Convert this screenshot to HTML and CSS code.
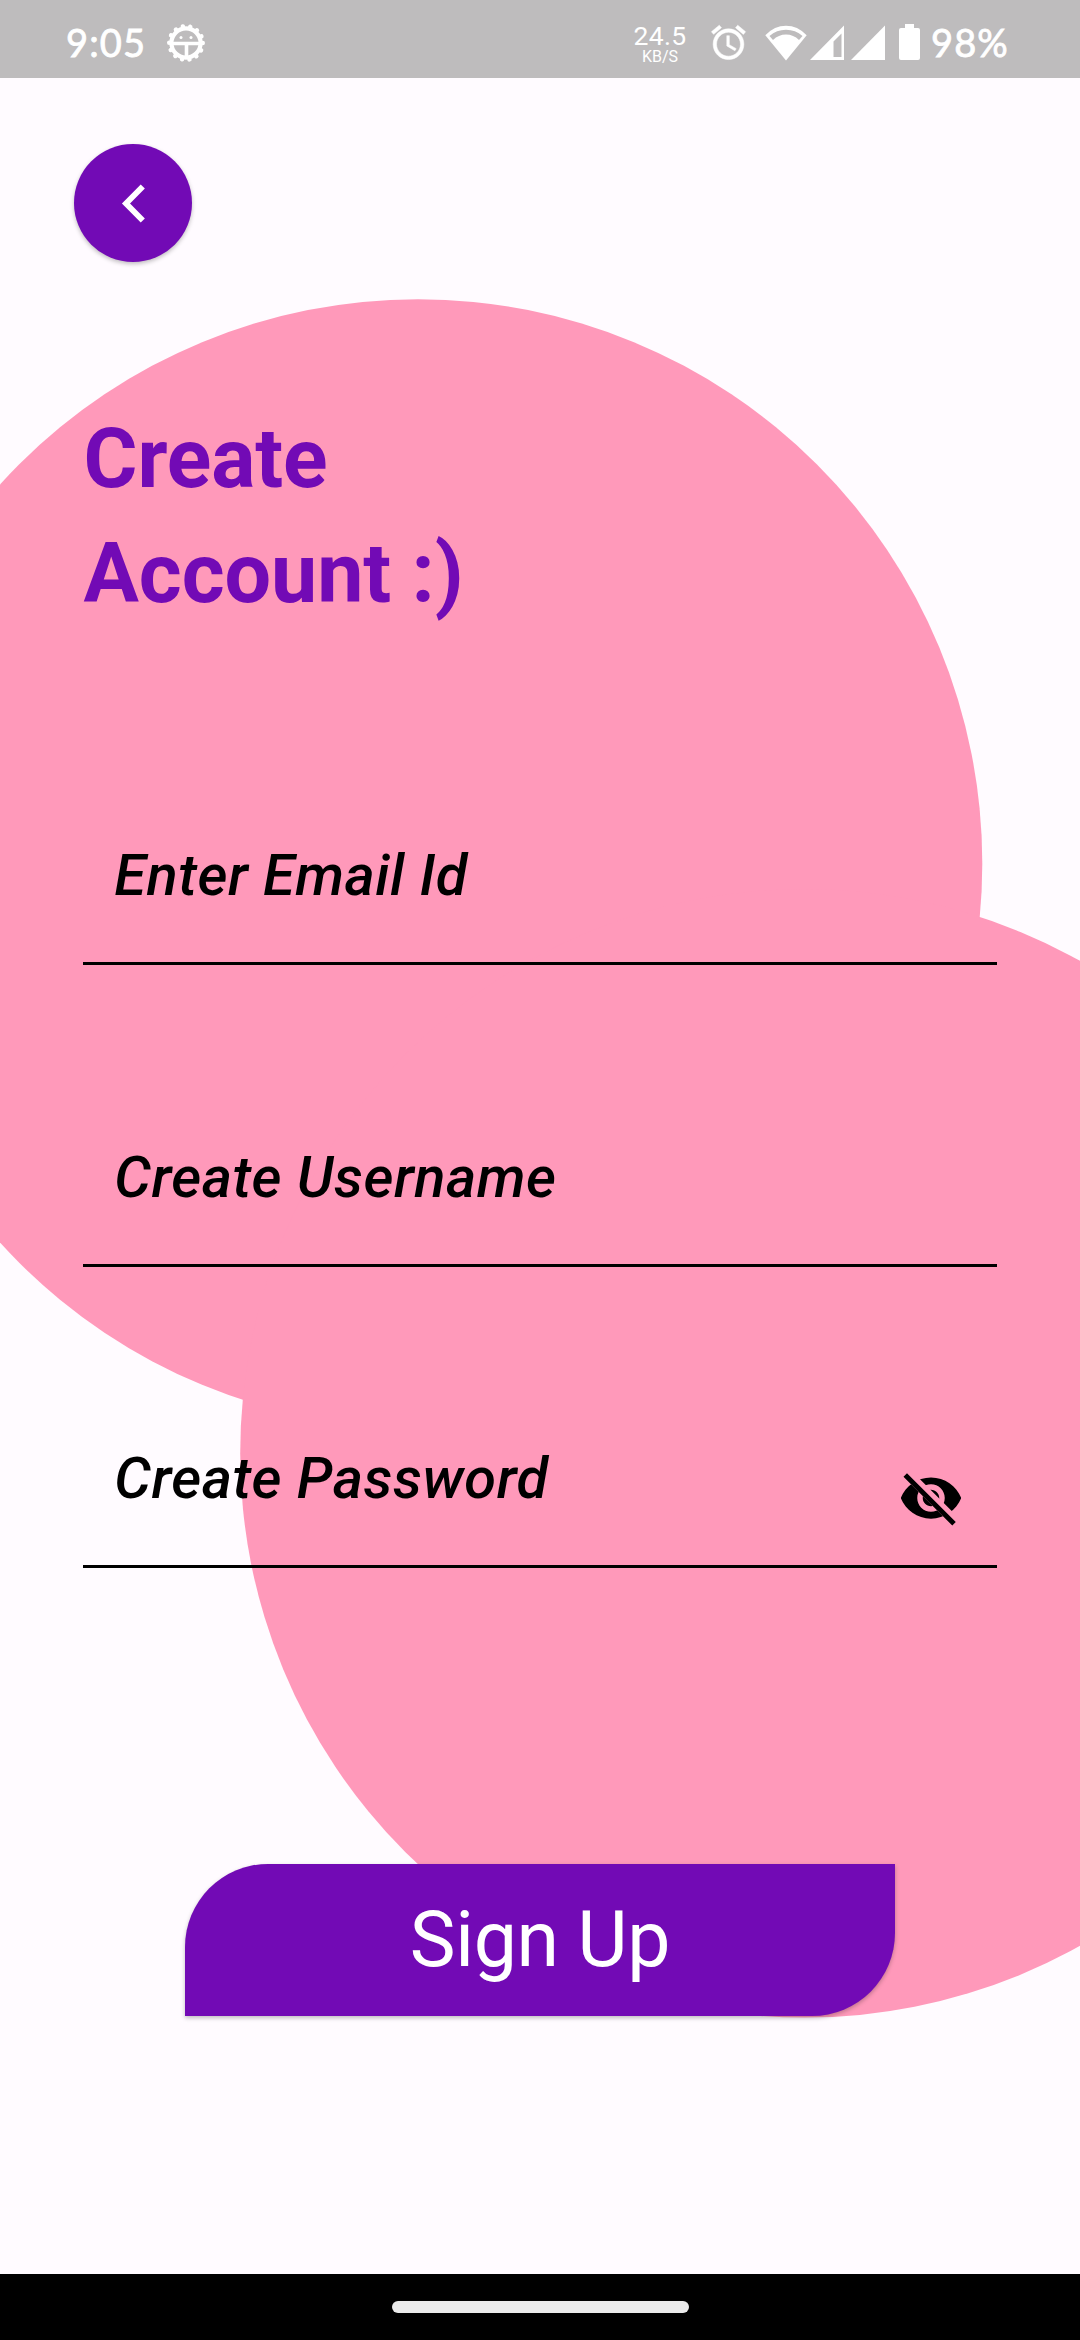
FILE: index.html
```html
<!DOCTYPE html>
<html lang="en">
<head>
<meta charset="utf-8">
<title>Create Account</title>
<link rel="stylesheet" href="styles.css">
</head>
<body>
<div class="screen">
  <header class="status">
    <span class="clock">9:05</span>
    <svg class="gear" width="40" height="40" viewBox="-20 -20 40 40">
      <circle r="14.6" fill="none" stroke="#fff" stroke-width="4.2"/>
      <circle r="16.800" fill="none" stroke="#fff" stroke-width="4.400" stroke-linecap="round" stroke-dasharray="0.1 7.440"/>
      <path d="M-13 .500H13M.500 0V14" fill="none" stroke="#fff" stroke-width="3.600"/>
      <circle cx="-5" cy="-5.6" r="1.5" fill="#fff"/><circle cx="5" cy="-5.6" r="1.5" fill="#fff"/>
    </svg>
    <div class="speed"><span class="rate">24.5</span><span class="unit">KB/S</span></div>
    <svg class="alarm" width="41" height="41" viewBox="0 0 24 24" fill="#fff" stroke="#fff" stroke-width=".3"><path d="M22 5.72l-4.6-3.86-1.29 1.53 4.6 3.86L22 5.72zM7.88 3.39L6.6 1.86 2 5.71l1.29 1.53 4.59-3.85zM12.5 8H11v6l4.75 2.85.75-1.23-4-2.37V8zM12 4c-4.97 0-9 4.03-9 9s4.02 9 9 9c4.97 0 9-4.03 9-9s-4.03-9-9-9zm0 16c-3.87 0-7-3.13-7-7s3.13-7 7-7 7 3.13 7 7-3.13 7-7 7z"/></svg>
    <svg class="wifi" width="42" height="36" viewBox="0 0 42 36">
      <path d="M.3 10.2Q9.500 .8 21 .8T41.700 10.200L21 35.500Z" fill="#fff"/>
      <path d="M4.500 11Q11.500 4.800 21 4.800T37.500 11L34 15Q28.500 9.500 21 9.500T8 15Z" fill="#bebcbd"/>
    </svg>
    <svg class="signal" width="34" height="35" viewBox="0 0 34 35"><path fill-rule="evenodd" d="M34 .5V35H0ZM31.500 8.500L23.500 16.500V32H31.500Z" fill="#fff"/></svg>
    <svg class="signal full" width="34" height="35" viewBox="0 0 34 35"><path d="M34 .5V35H0Z" fill="#fff"/></svg>
    <svg class="battery" width="21" height="36" viewBox="0 0 21 36"><path d="M6 0H15V4H19Q21 4 21 6V34Q21 36 19 36H2Q0 36 0 34V6Q0 4 2 4H6Z" fill="#fff"/></svg>
    <span class="percent">98%</span>
  </header>

  <main class="page">
    <svg class="bubbles" width="1080" height="2196" viewBox="0 78 1080 2196" fill="#ff99ba">
      <circle cx="418" cy="863.500" r="564.300"/>
      <circle cx="804.500" cy="1453.300" r="564.300"/>
    </svg>
    <button class="back" aria-label="Back">
      <svg width="26" height="42" viewBox="0 0 26 42"><path d="M22.800 4.500L6 21.500L22.800 38.500" fill="none" stroke="#fff" stroke-width="5.800"/></svg>
    </button>
    <h1 class="title">Create<br>Account :)</h1>
    <form class="form">
      <div class="field"><span class="hint">Enter Email Id</span></div>
      <div class="field"><span class="hint">Create Username</span></div>
      <div class="field">
        <span class="hint">Create Password</span>
        <svg class="eye" width="66" height="66" viewBox="0 0 24 24">
          <clipPath id="strike"><path d="M2 4.270L19.730 22L22.270 19.460L4.540 1.730V1H23V23H1V4.270Z"/></clipPath>
          <path clip-path="url(#strike)" d="M12 4.500C7 4.500 2.730 7.610 1 12c1.730 4.390 6 7.500 11 7.500s9.270-3.110 11-7.500c-1.730-4.390-6-7.500-11-7.500zM12 17c-2.760 0-5-2.240-5-5s2.240-5 5-5 5 2.240 5 5-2.240 5-5 5zM12 9c-1.660 0-3 1.340-3 3s1.340 3 3 3 3-1.340 3-3-1.340-3-3-3z"/>
          <path d="M3.270 4.270L19.740 20.740" fill="none" stroke="#000" stroke-width="1.800" stroke-linecap="square"/>
        </svg>
      </div>
    </form>
    <button class="signup"><span>Sign Up</span></button>
  </main>

  <footer class="nav"><div class="pill"></div></footer>
</div>
</body>
</html>
```

FILE: styles.css
```css
* { box-sizing: border-box; }
body { margin: 0; font-family: Roboto, sans-serif; }
button { border: 0; padding: 0; font-family: inherit; }
svg { display: block; flex: none; }
.screen { width: 1080px; height: 2340px; display: flex; flex-direction: column; background: #fffbff; overflow: hidden; }

.status { height: 78px; flex: none; display: flex; align-items: flex-start; background: #bebcbd; color: #fff; padding-left: 66px; white-space: nowrap; }
.clock, .percent { font-family: Lato, sans-serif; font-size: 38px; line-height: 46px; padding-top: 19px; letter-spacing: 1.1px; -webkit-text-stroke: 0.8px #fff; }
.clock { width: 100px; }
.gear { margin-top: 23px; }
.speed { width: 54px; margin: 23px 0 0 427px; display: flex; flex-direction: column; align-items: center; }
.rate { font-size: 26.5px; line-height: 25px; letter-spacing: 0.3px; }
.unit { font-size: 16px; line-height: 18px; }
.alarm { margin: 22px 0 0 21px; }
.wifi { margin: 25px 0 0 16px; }
.signal { margin: 25px 0 0 3px; }
.signal.full { margin-left: 7px; }
.battery { margin: 24px 0 0 14px; }
.percent { margin-left: 11px; }

.page { position: relative; flex: 1; display: flex; flex-direction: column; align-items: flex-start; }
.bubbles { position: absolute; inset: 0; }
.page > :not(.bubbles) { z-index: 1; }
.back { width: 118px; height: 118px; margin: 66px 0 0 74px; border-radius: 50%; background: #720ab5; display: flex; align-items: center; justify-content: center; box-shadow: 0 2px 4px rgba(0,0,0,.25); }
.title { margin: 139px 0 0 83.5px; font-size: 82.5px; line-height: 115px; font-weight: 700; letter-spacing: -0.1px; color: #720ab5; white-space: nowrap; }
.form { width: 913.5px; margin: 210px 0 0 83.3px; display: flex; flex-direction: column; gap: 177.6px; }
.field { height: 124px; border-bottom: 3px solid #000; padding-left: 31px; display: flex; }
.hint { flex: 1; font-size: 57.75px; line-height: 68px; font-style: italic; font-weight: 500; letter-spacing: 0.52px; color: #000; white-space: nowrap; }
.eye { margin: 20.5px 32.7px 0 0; }
.signup { width: 709.4px; height: 152px; margin: 295.8px 0 0 185.3px; border-radius: 83px 0 83px 0; background: #720ab5; color: #fff; font-size: 77px; line-height: 90px; letter-spacing: -0.3px; display: flex; align-items: center; justify-content: center; box-shadow: 0 2px 4px rgba(0,0,0,.25); }

.nav { height: 66px; flex: none; background: #000; display: flex; justify-content: center; align-items: flex-start; padding-top: 27px; }
.pill { width: 297px; height: 12px; border-radius: 6px; background: #ebebeb; }
```
